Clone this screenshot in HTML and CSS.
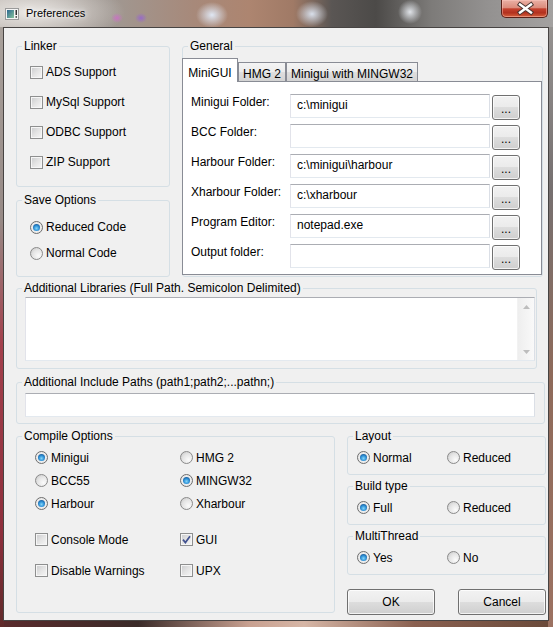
FILE: index.html
```html
<!DOCTYPE html>
<html>
<head>
<meta charset="utf-8">
<title>Preferences</title>
<link rel="stylesheet" href="styles.css">
</head>
<body>
<div class="window">
  <div class="titlebar">
    <svg class="app-icon" width="14" height="12" viewBox="0 0 14 12">
      <defs>
        <linearGradient id="ig" x1="0" y1="0" x2="1" y2="1">
          <stop offset="0" stop-color="#2c6690"/>
          <stop offset="1" stop-color="#86c49c"/>
        </linearGradient>
      </defs>
      <rect x="0.5" y="0.5" width="13" height="11" fill="#f4f4f4" stroke="#9a9a9a"/>
      <rect x="2" y="2" width="7" height="8" fill="url(#ig)"/>
      <rect x="10.5" y="2" width="1.5" height="5" fill="#333"/>
      <rect x="10.5" y="8.2" width="1.5" height="1.5" fill="#333"/>
    </svg>
    <span class="title">Preferences</span>
    <div class="close">
      <svg width="45" height="17" viewBox="0 0 45 17">
        <path d="M18 4.5 L29 12.5 M29 4.5 L18 12.5" stroke="#4a3532" stroke-width="4.4" stroke-linecap="square" fill="none"/>
        <path d="M18 4.5 L29 12.5 M29 4.5 L18 12.5" stroke="#ffffff" stroke-width="2.4" stroke-linecap="square" fill="none"/>
      </svg>
    </div>
  </div>

  <div class="client">
    <div class="top-row">
      <div class="left-col">
        <fieldset class="group linker">
          <legend>Linker</legend>
          <div class="linker-body">
            <label class="opt row30"><span class="check"></span>ADS Support</label>
            <label class="opt row30"><span class="check"></span>MySql Support</label>
            <label class="opt row30"><span class="check"></span>ODBC Support</label>
            <label class="opt row30"><span class="check"></span>ZIP Support</label>
          </div>
        </fieldset>
        <fieldset class="group save">
          <legend>Save Options</legend>
          <div class="save-body">
            <label class="opt row26"><span class="radio on"></span>Reduced Code</label>
            <label class="opt row26"><span class="radio"></span>Normal Code</label>
          </div>
        </fieldset>
      </div>

      <fieldset class="group general">
        <legend>General</legend>
        <div class="general-body">
          <div class="tabs">
            <div class="tab active tab-minigui">MiniGUI</div>
            <div class="tab tab-hmg">HMG 2</div>
            <div class="tab tab-mingw">Minigui with MINGW32</div>
          </div>
          <div class="tab-panel">
            <div class="field-row"><span class="flabel">Minigui Folder:</span><div class="textbox">c:\minigui</div><div class="btn dots">...</div></div>
            <div class="field-row"><span class="flabel">BCC Folder:</span><div class="textbox"></div><div class="btn dots">...</div></div>
            <div class="field-row"><span class="flabel">Harbour Folder:</span><div class="textbox">c:\minigui\harbour</div><div class="btn dots">...</div></div>
            <div class="field-row"><span class="flabel">Xharbour Folder:</span><div class="textbox">c:\xharbour</div><div class="btn dots">...</div></div>
            <div class="field-row"><span class="flabel">Program Editor:</span><div class="textbox">notepad.exe</div><div class="btn dots">...</div></div>
            <div class="field-row"><span class="flabel">Output folder:</span><div class="textbox"></div><div class="btn dots">...</div></div>
          </div>
        </div>
      </fieldset>
    </div>

    <fieldset class="group libs">
      <legend>Additional Libraries (Full Path. Semicolon Delimited)</legend>
      <div class="libs-body">
        <div class="area">
          <div class="area-text"></div>
          <div class="vscroll">
            <div class="arrow"><svg width="7" height="4" viewBox="0 0 7 4"><path d="M0 4 L3.5 0 L7 4 Z" fill="#bdbdbd"/></svg></div>
            <div class="arrow"><svg width="7" height="4" viewBox="0 0 7 4"><path d="M0 0 L7 0 L3.5 4 Z" fill="#bdbdbd"/></svg></div>
          </div>
        </div>
      </div>
    </fieldset>

    <fieldset class="group include">
      <legend>Additional Include Paths (path1;path2;...pathn;)</legend>
      <div class="include-body">
        <div class="textbox wide"></div>
      </div>
    </fieldset>

    <div class="bottom-row">
      <fieldset class="group compile">
        <legend>Compile Options</legend>
        <div class="compile-body">
          <div class="radio-grid">
            <label class="opt"><span class="radio on"></span>Minigui</label>
            <label class="opt"><span class="radio"></span>HMG 2</label>
            <label class="opt"><span class="radio"></span>BCC55</label>
            <label class="opt"><span class="radio on"></span>MINGW32</label>
            <label class="opt"><span class="radio on"></span>Harbour</label>
            <label class="opt"><span class="radio"></span>Xharbour</label>
          </div>
          <div class="check-grid">
            <label class="opt"><span class="check"></span>Console Mode</label>
            <label class="opt"><span class="check"><svg width="9" height="9" viewBox="0 0 9 9"><path d="M1 4.6 L3.4 7.6 L8 1.2" fill="none" stroke="#42528f" stroke-width="1.7"/></svg></span>GUI</label>
            <label class="opt"><span class="check"></span>Disable Warnings</label>
            <label class="opt"><span class="check"></span>UPX</label>
          </div>
        </div>
      </fieldset>

      <div class="right-col">
        <fieldset class="group small">
          <legend>Layout</legend>
          <div class="small-body pair">
            <label class="opt"><span class="radio on"></span>Normal</label>
            <label class="opt"><span class="radio"></span>Reduced</label>
          </div>
        </fieldset>
        <fieldset class="group small spaced">
          <legend>Build type</legend>
          <div class="small-body pair">
            <label class="opt"><span class="radio on"></span>Full</label>
            <label class="opt"><span class="radio"></span>Reduced</label>
          </div>
        </fieldset>
        <fieldset class="group small spaced">
          <legend>MultiThread</legend>
          <div class="small-body pair">
            <label class="opt"><span class="radio on"></span>Yes</label>
            <label class="opt"><span class="radio"></span>No</label>
          </div>
        </fieldset>
        <div class="buttons">
          <div class="btn btn-wide">OK</div>
          <div class="btn btn-wide">Cancel</div>
        </div>
      </div>
    </div>
  </div>
</div>
</body>
</html>
```

FILE: styles.css
```css
* { box-sizing: border-box; }

html, body {
  margin: 0;
  padding: 0;
}

body {
  width: 553px;
  height: 627px;
  overflow: hidden;
  font-family: "Liberation Sans", Arial, sans-serif;
  font-size: 12px;
  color: #000;
}

.window {
  width: 553px;
  height: 627px;
  display: flex;
  flex-direction: column;
  background:
    linear-gradient(to bottom, #aba49e 0%, #978a86 35%, #a3404c 55%, #8e2f3c 85%, #5e2a2a 100%) left top / 4px 100% no-repeat,
    linear-gradient(to bottom, #9a9896 0%, #767070 30%, #8e6a5a 60%, #9c7262 100%) right top / 5px 100% no-repeat,
    linear-gradient(to right, #5a2a2c 0%, #3a2a28 25%, #c8a090 45%, #d6b6a6 55%, #8a6050 75%, #6a4a3a 100%) left bottom / 100% 7px no-repeat,
    #8c8582;
}

/* ---------- title bar ---------- */
.titlebar {
  height: 27px;
  flex: none;
  display: flex;
  align-items: flex-start;
  background:
    radial-gradient(16px 13px at 212px 15px, rgba(226,236,250,.95), rgba(226,236,250,0)),
    radial-gradient(16px 13px at 312px 14px, rgba(226,236,250,.9), rgba(226,236,250,0)),
    radial-gradient(12px 12px at 410px 12px, rgba(236,240,246,.9), rgba(236,240,246,0)),
    radial-gradient(6px 5px at 117px 18px, rgba(205,110,200,.85), rgba(205,110,200,0)),
    radial-gradient(6px 5px at 141px 18px, rgba(150,100,210,.85), rgba(150,100,210,0)),
    radial-gradient(95px 32px at 30px 12px, rgba(238,235,232,.95), rgba(238,235,232,0)),
    linear-gradient(to right, #b3aca6 0, #a09892 20%, #a7897a 35%, #ad8570 45%, #a07a66 53%, #5a5654 60%, #4c4a48 68%, #7d7b79 78%, #939190 88%, #a3a1a0 100%);
}

.app-icon {
  flex: none;
  margin: 8px 0 0 5px;
}

.title {
  margin: 6px 0 0 7px;
  font-size: 11px;
  line-height: 14px;
  color: #000;
  text-shadow: 0 0 4px #fff, 0 0 8px rgba(255,255,255,.85);
}

.close {
  flex: none;
  margin-left: auto;
  margin-right: 5px;
  width: 47px;
  height: 18px;
  border: 1px solid #5a2018;
  border-top: none;
  border-radius: 0 0 5px 5px;
  background: linear-gradient(to bottom, #eab0a5 0%, #dc8c7c 45%, #c4412e 52%, #b2311f 75%, #d6603c 100%);
  box-shadow: inset 0 0 0 1px rgba(255,205,195,.45);
}

.close svg { display: block; }

/* ---------- client area ---------- */
.client {
  flex: none;
  margin-left: 3px;
  width: 546px;
  height: 594px;
  border: 1px solid #474443;
  background: #f0f0f0;
  padding: 11px 0 0 12px;
}

.top-row {
  display: flex;
  align-items: flex-start;
  gap: 12px;
  height: 238px;
}

.left-col {
  width: 154px;
  display: flex;
  flex-direction: column;
}

/* group boxes */
.group {
  margin: 0;
  padding: 0;
  min-width: 0;
  border: 1px solid #d5dfe5;
  border-radius: 3px;
}

.group legend {
  padding: 0 2px;
  margin-left: 5px;
  font-size: 12px;
  line-height: 14px;
  white-space: nowrap;
}

.linker { width: 154px; }
.linker-body { padding: 4px 0 9px 13px; }

.save { width: 154px; margin-top: 6px; }
.save-body { padding: 7px 0 10px 13px; }

.general { width: 361px; }
.general-body { padding: 5px 0 1px 0; }

/* options */
.opt {
  display: flex;
  align-items: center;
  white-space: nowrap;
  line-height: 14px;
}

.row30 { height: 30px; }
.row26 { height: 26px; }

.check {
  flex: none;
  width: 13px;
  height: 13px;
  margin-right: 3px;
  border: 1px solid #8e8f8f;
  background: linear-gradient(135deg, #cacbcd 0%, #e4e4e4 50%, #f7f7f7 100%);
  box-shadow: inset 0 0 0 1px #f6f6f6;
  display: flex;
  align-items: center;
  justify-content: center;
}

.check svg { display: block; }

.radio {
  flex: none;
  width: 13px;
  height: 13px;
  margin-right: 3px;
  border-radius: 50%;
  border: 1px solid #8a8a8a;
  background: radial-gradient(circle at 68% 70%, #fbfbfb 0%, #e4e4e4 55%, #c2c2c2 100%);
  display: flex;
  align-items: center;
  justify-content: center;
}

.radio.on {
  border-color: #6e6e6e;
  background: radial-gradient(circle at 50% 50%, #f4f4f4 0%, #e6e6e6 100%);
}

.radio.on::after {
  content: "";
  width: 7px;
  height: 7px;
  border-radius: 50%;
  background: radial-gradient(circle at 50% 62%, #86d6f8 0%, #2e92d8 45%, #0d3b76 100%);
}

/* tabs */
.tabs {
  display: flex;
  align-items: flex-end;
  height: 23px;
  margin-left: -1px;
}

.tab {
  height: 19px;
  border: 1px solid #898c95;
  border-bottom: none;
  background: linear-gradient(to bottom, #f4f4f4 0%, #ececec 50%, #dfdfdf 51%, #d3d3d3 100%);
  text-align: center;
  padding-top: 4px;
  line-height: 14px;
  white-space: nowrap;
}

.tab.active {
  height: 24px;
  margin-bottom: -1px;
  padding-top: 7px;
  background: #fff;
  position: relative;
  z-index: 1;
}

.tab-minigui { width: 56px; }
.tab-hmg { width: 48px; }
.tab-mingw { width: 132px; }

.tab-panel {
  margin-left: -1px;
  width: 360px;
  height: 194px;
  border: 1px solid #898c95;
  background: #fff;
  padding: 12px 0 0 8px;
}

.field-row {
  display: flex;
  align-items: flex-start;
  height: 30px;
}

.flabel {
  width: 99px;
  padding-top: 1px;
  line-height: 14px;
  white-space: nowrap;
}

.textbox {
  width: 200px;
  height: 24px;
  border: 1px solid;
  border-color: #abadb3 #dbdfe6 #e3e9ef #e2e3ea;
  background: #fff;
  padding: 0 0 0 6px;
  line-height: 20px;
  white-space: nowrap;
}

.textbox.wide { width: 510px; }

.btn {
  border: 1px solid #707070;
  border-radius: 3px;
  background: linear-gradient(to bottom, #f2f2f2 0%, #ebebeb 49%, #dddddd 50%, #cfcfcf 100%);
  box-shadow: inset 0 0 0 1px rgba(255,255,255,.75);
  display: flex;
  align-items: center;
  justify-content: center;
  line-height: 14px;
}

.dots {
  width: 28px;
  height: 25px;
  margin: 1px 0 0 2px;
  padding-top: 3px;
}

/* libraries */
.libs { width: 521px; margin-top: 4px; }
.libs-body { padding: 2px 1px 7px 8px; }

.area {
  display: flex;
  width: 510px;
  height: 64px;
  border: 1px solid;
  border-color: #abadb3 #dbdfe6 #e3e9ef #e2e3ea;
  background: #fff;
}

.area-text { flex: 1; }

.vscroll {
  width: 17px;
  display: flex;
  flex-direction: column;
  justify-content: space-between;
  background: linear-gradient(to right, #eeeeee, #f9f9f9);
  border-left: 1px solid #f2f2f2;
}

.arrow {
  height: 17px;
  display: flex;
  align-items: center;
  justify-content: center;
}

.arrow svg { display: block; }

/* include */
.include { width: 529px; margin-top: 6px; }
.include-body { padding: 4px 0 6px 8px; }

/* bottom row */
.bottom-row {
  display: flex;
  align-items: flex-start;
  gap: 12px;
  margin-top: 5px;
}

.compile { width: 319px; }
.compile-body { padding: 3px 0 26px 18px; }

.radio-grid {
  display: grid;
  grid-template-columns: 145px auto;
  grid-auto-rows: 23px;
}

.check-grid {
  display: grid;
  grid-template-columns: 145px auto;
  grid-auto-rows: 31px;
  margin-top: 9px;
}

.right-col {
  width: 199px;
  display: flex;
  flex-direction: column;
}

.small { width: 199px; }
.small.spaced { margin-top: 4px; }

.small-body { padding: 3px 0 5px 9px; }

.pair {
  display: grid;
  grid-template-columns: 90px auto;
  grid-auto-rows: 23px;
}

.buttons {
  display: flex;
  justify-content: space-between;
  margin-top: 14px;
}

.btn-wide {
  width: 88px;
  height: 26px;
}
```
